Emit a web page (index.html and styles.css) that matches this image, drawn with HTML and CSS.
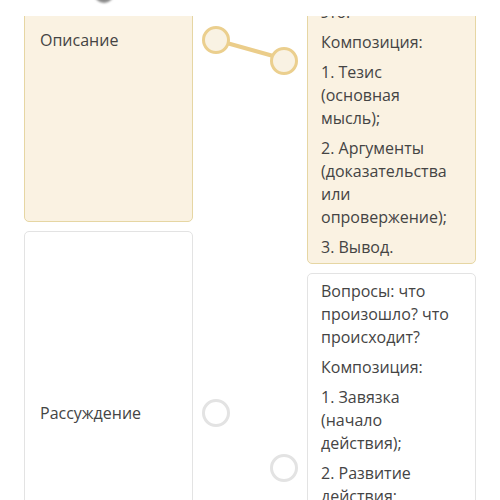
FILE: index.html
```html
<!DOCTYPE html>
<html lang="ru">
<head>
<meta charset="utf-8">
<link rel="stylesheet" href="styles.css">
</head>
<body>
<div class="header"><span class="header-blob"></span></div>
<div class="viewport">
  <div class="board">
    <svg class="links" width="500" height="900" viewBox="0 0 500 900">
      <line x1="216" y1="182" x2="284" y2="201" stroke="#ebcd8a" stroke-width="4" stroke-linecap="round"/>
    </svg>
    <div class="col col-left">
      <div class="item">
        <div class="card card-left selected"><p>Описание</p></div>
        <span class="dot dot-selected"></span>
      </div>
      <div class="item">
        <div class="card card-left"><p>Рассуждение</p></div>
        <span class="dot"></span>
      </div>
    </div>
    <div class="col col-right">
      <div class="item">
        <span class="dot dot-selected"></span>
        <div class="card card-right selected">
          <p>Вопросы: почему?</p>
          <p>Что из этого следует?</p>
          <p>Цель: доказать</p>
          <p>это.</p>
          <p>Композиция:</p>
          <p>1. Тезис (основная мысль);</p>
          <p>2. Аргументы (доказательства или опровержение);</p>
          <p>3. Вывод.</p>
        </div>
      </div>
      <div class="item">
        <span class="dot"></span>
        <div class="card card-right">
          <p>Вопросы: что произошло? что происходит?</p>
          <p>Композиция:</p>
          <p>1. Завязка (начало действия);</p>
          <p>2. Развитие действия;</p>
          <p>3. Кульминация (самый напряжённый момент);</p>
          <p>4. Развязка.</p>
        </div>
      </div>
    </div>
  </div>
</div>
</body>
</html>
```
FILE: styles.css
```css
* { box-sizing: border-box; }
html, body { margin: 0; padding: 0; background: #fff; }
body {
  font-family: "Open Sans", "Noto Sans", sans-serif;
  font-size: 16px;
  line-height: 23px;
  color: #444;
  width: 500px;
  height: 500px;
  overflow: hidden;
}
.header {
  height: 16px;
  background: #fff;
  position: relative;
  z-index: 2;
}
.header-blob {
  position: absolute;
  left: 94px;
  top: -17px;
  width: 20px;
  height: 20px;
  border-radius: 50%;
  background: #8a8a8a;
  filter: blur(1.2px);
}
.viewport {
  height: 484px;
  overflow: hidden;
}
.board {
  position: relative;
  display: flex;
  gap: 40px;
  padding-left: 24px;
  margin-top: -158px;
}
.links {
  position: absolute;
  left: 0;
  top: 0;
  z-index: 0;
}
.col {
  display: flex;
  flex-direction: column;
  gap: 9px;
  position: relative;
  z-index: 1;
}
.item {
  display: flex;
  align-items: center;
  gap: 9px;
}
.card {
  width: 169px;
  border: 1px solid #e3e3e3;
  border-radius: 5px;
  background: #fff;
}
.card.selected {
  background: #faf2e2;
  border-color: #e6d6a3;
}
.card-left {
  height: 364px;
  display: flex;
  align-items: center;
  padding: 0 15px;
}
.card-right {
  padding: 6px 13px 4px;
  display: flex;
  flex-direction: column;
  gap: 7px;
}
.card-right:last-child {
  min-height: 390px;
}
p { margin: 0; }
.dot {
  flex: none;
  width: 28px;
  height: 28px;
  border-radius: 50%;
  border: 3px solid #e3e3e3;
  background: #fff;
}
.dot-selected {
  border-color: #ebcf8e;
  background: #f9f2e3;
}
```
